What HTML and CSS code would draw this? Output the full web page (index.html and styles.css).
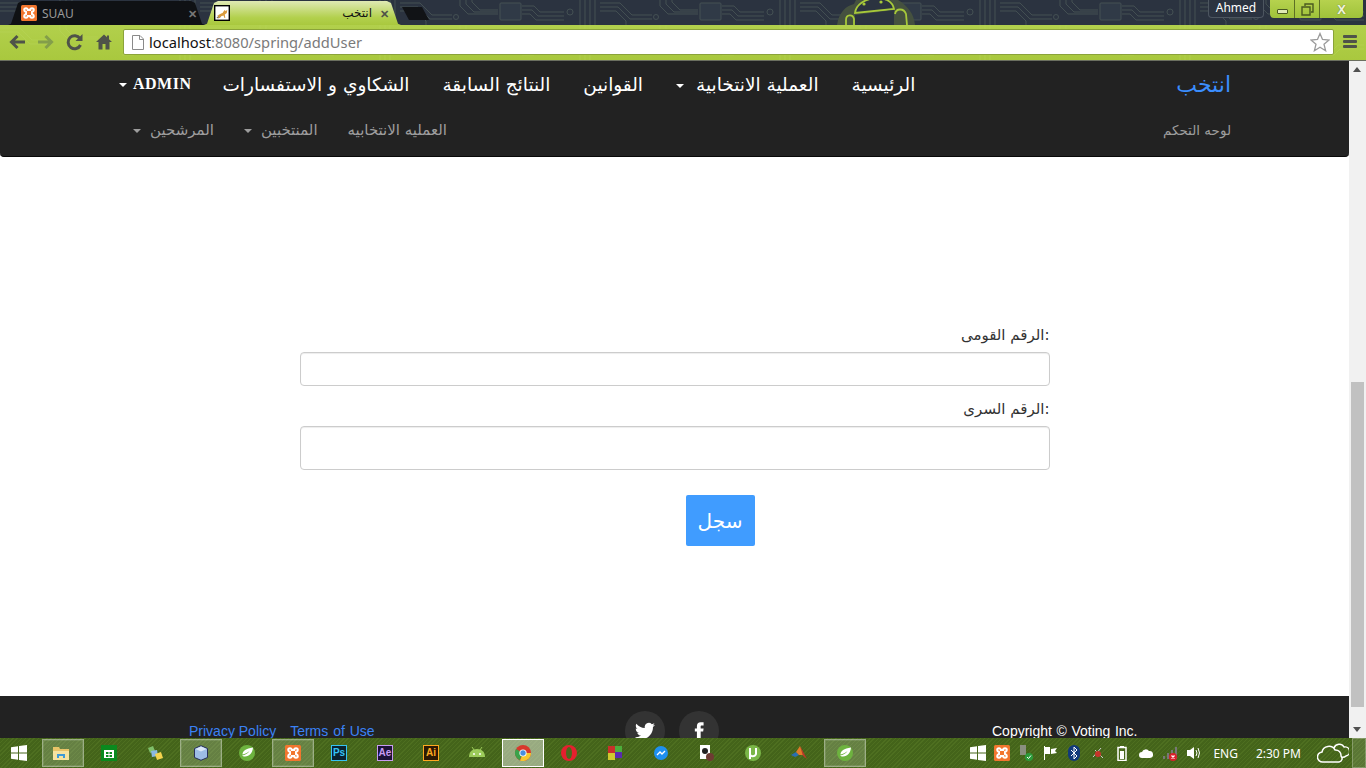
FILE: index.html
```html
<!DOCTYPE html>
<html lang="en">
<head>
    <meta charset="UTF-8">
    <meta name="viewport" content="width=device-width, initial-scale=1.0">
    <title>انتخب</title>
    <link rel="stylesheet" href="styles.css">
</head>
<body>
    <svg class="defs" width="0" height="0">
        <defs>
            <symbol id="i-win" viewBox="0 0 16 16"><path fill="#fff" d="M0 2.300 7 1.300V7.500H0zM8 1.100 16 0V7.500H8zM0 8.500H7V14.700L0 13.700zM8 8.500H16V16L8 14.900z"/></symbol>
            <symbol id="i-xampp" viewBox="0 0 16 16"><rect width="16" height="16" rx="1.500" fill="#f2762e"/><path fill="none" stroke="#fff" stroke-width="2" d="M5 3.200a1.800 1.800 0 0 0-1.800 1.800c0 1 .8 1.600 1.800 2v2c-1 .4-1.800 1-1.800 2a1.800 1.800 0 0 0 3.600 0h2.400a1.800 1.800 0 0 0 3.600 0c0-1-.8-1.600-1.800-2V7c1-.4 1.800-1 1.800-2a1.800 1.800 0 0 0-3.600 0H6.800A1.800 1.800 0 0 0 5 3.200z"/></symbol>
            <symbol id="i-spring" viewBox="0 0 16 16"><circle cx="8" cy="8" r="8" fill="#6db33f"/><path fill="#fff" d="M14 2.500c-.5 5.500-3.500 9-8 9-1.500 0-2.500-.5-3-1 3-.5 6-2 7.500-4.500-2 2-4.500 3-7 3.500C3.500 6 7 3.500 14 2.500z"/></symbol>
            <pattern id="circuit" width="200" height="25" patternUnits="userSpaceOnUse">
                <path fill="none" stroke="#434f52" d="M0 3H20L32 15H52M0 7H18L30 19H52M0 11H16L26 21V25M60 0V6L68 14H98M66 0V4L74 12H98M72 0V2L80 10H98M122 6H134L140 12H164M122 10H132L138 16H164M122 14H130L136 20H164M180 0V25M185 0V25M190 0V25M195 0V25"/>
                <rect x="100" y="3" width="21" height="17" rx="1" fill="#303a47" stroke="#434f52"/>
                <circle cx="170" cy="12" r="3" fill="none" stroke="#434f52"/>
                <circle cx="56" cy="17" r="2.500" fill="none" stroke="#434f52"/>
            </pattern>
            <pattern id="circuit-light" width="200" height="36" patternUnits="userSpaceOnUse">
                <path fill="none" stroke="#bad65c" d="M0 3H20L32 15H52M0 7H18L30 19H52M60 0V6L68 14H98M66 0V4L74 12H98M122 30H134L140 24H164M122 26H132L138 20H164M180 0V36M185 0V36M190 0V36"/>
            </pattern>
        </defs>
    </svg>

    <header class="tabstrip">
        <svg class="circuit" width="100%" height="100%"><rect width="100%" height="100%" fill="url(#circuit)"/></svg>
        <div class="tab tab-back">
            <svg class="favicon"><use href="#i-xampp"/></svg>
            <span class="tab-title">SUAU</span>
            <span class="tab-close">✕</span>
        </div>
        <div class="tab tab-active">
            <svg class="favicon" viewBox="0 0 16 16"><rect x=".7" y=".7" width="14.600" height="14.600" fill="#fff" stroke="#000" stroke-width="1.400"/><path fill="#7d7467" d="M2.500 12.500 6 10l1 2-3 1.500z"/><path fill="#d99a3d" d="M3 10.500c2-.5 3.500-2 5.500-2.500l2-3 1 1 1.800-1-.5 3-2 1.500.5 3.500H10.500l-1-2.500-3 1-1 1.500H4l1-2z"/></svg>
            <span class="tab-title tab-title-rtl" dir="rtl">انتخب</span>
            <span class="tab-close">✕</span>
        </div>
        <div class="newtab"></div>
        <svg class="android-badge" viewBox="0 0 80 25">
            <path fill="#45513f" d="M1 25C3 12 10 6 18 4L20 0H62C72 6 78 14 79 25z"/>
            <path fill="#2b3340" stroke="#a6c83a" stroke-width="1.800" d="M19 13C21-4 55-8 58 9z"/>
            <path fill="#2b3340" d="M19 15 58 10V25H19z"/>
            <path fill="none" stroke="#a6c83a" stroke-width="1.800" d="M10 25V20C10 14 17 14 18 19V25M59 14C60 8 68 8 70 14L71 25"/>
            <circle cx="28" cy="4" r="1.600" fill="#a6c83a"/>
            <circle cx="45" cy="2" r="1.600" fill="#a6c83a"/>
        </svg>
        <div class="profile">Ahmed</div>
        <div class="winbtns">
            <span class="winbtn winbtn-min"><i></i></span>
            <span class="winbtn winbtn-max"><svg width="13" height="13" viewBox="0 0 13 13"><path fill="none" stroke="#4a5a20" stroke-width="1.400" d="M4 3V1h8v8h-2M1 4h8v8H1z"/></svg></span>
            <span class="winbtn winbtn-close">X</span>
        </div>
    </header>

    <div class="toolbar">
        <svg class="circuit circuit-faint" width="100%" height="100%"><rect width="100%" height="100%" fill="url(#circuit-light)"/></svg>
        <svg class="tool" viewBox="0 0 18 18"><path fill="none" stroke="#4f5349" stroke-width="3" d="M17 9H4M9.500 3 3.500 9l6 6"/></svg>
        <svg class="tool tool-off" viewBox="0 0 18 18"><path fill="none" stroke="#7f9a4b" stroke-width="3" d="M1 9H14M8.500 3l6 6-6 6"/></svg>
        <svg class="tool" viewBox="0 0 18 18"><path fill="none" stroke="#4f5349" stroke-width="3" d="M14.500 12a6.500 6.500 0 1 1-.5-6.500"/><path fill="#4f5349" d="M16.500 1v7h-7z"/></svg>
        <svg class="tool" viewBox="0 0 18 18"><path fill="#4f5349" d="M9 1.500 1 9h2.500v7.500H7.500V11h3v5.500h4V9H17l-3-2.800V2.500h-2v1.800z"/></svg>
        <div class="omnibox">
            <svg class="pageicon" viewBox="0 0 12 15"><path fill="#fff" stroke="#8a8a8a" d="M.5.500H8L11.500 4V14.500H.5z"/><path fill="none" stroke="#8a8a8a" d="M7.500.500V4.500H11.500"/></svg>
            <span class="url"><span class="url-host">localhost</span>:8080/spring/addUser</span>
            <svg class="star" viewBox="0 0 20 20"><path fill="#fff" stroke="#9b9b9b" stroke-width="1.300" d="M10 1.500 12.500 7.500 19 8 14 12.200 15.600 18.700 10 15.200 4.400 18.700 6 12.200 1 8 7.500 7.500z"/></svg>
        </div>
        <div class="menu"><i></i><i></i><i></i></div>
    </div>

    <div class="viewport">
        <div class="page">
            <nav class="navbar">
                <div class="nav-row nav-main" dir="rtl">
                    <a class="brand">انتخب</a>
                    <ul class="nav-links">
                        <li>الرئيسية</li>
                        <li class="caret caret-wide">العملية الانتخابية</li>
                        <li>القوانين</li>
                        <li>النتائج السابقة</li>
                        <li>الشكاوي و الاستفسارات</li>
                        <li class="caret caret-latin">ADMIN</li>
                    </ul>
                </div>
                <div class="nav-row nav-sub" dir="rtl">
                    <a class="brand-sub">لوحه التحكم</a>
                    <ul class="nav-links">
                        <li>العمليه الانتخابيه</li>
                        <li class="caret">المنتخبين</li>
                        <li class="caret">المرشحين</li>
                    </ul>
                </div>
            </nav>

            <main class="content">
                <form class="login-form">
                    <label class="form-label" dir="rtl">:الرقم القومى</label>
                    <input class="form-input" type="text">
                    <label class="form-label" dir="rtl">:الرقم السرى</label>
                    <input class="form-input form-input-lg" type="password">
                    <button class="btn-submit" type="button">سجل</button>
                </form>
            </main>

            <footer class="footer">
                <div class="footer-links"><a>Privacy Policy</a><a class="terms">Terms of Use</a></div>
                <div class="footer-social">
                    <span class="social"><svg width="20" height="20" viewBox="0 0 24 24"><path fill="#fff" d="M23.953 4.570a10 10 0 0 1-2.825.775 4.958 4.958 0 0 0 2.163-2.723c-.951.555-2.005.959-3.127 1.184a4.920 4.920 0 0 0-8.384 4.482C7.690 8.095 4.067 6.130 1.640 3.162a4.822 4.822 0 0 0-.666 2.475c0 1.710.870 3.213 2.188 4.096a4.904 4.904 0 0 1-2.228-.616v.060a4.923 4.923 0 0 0 3.946 4.827 4.996 4.996 0 0 1-2.212.085 4.936 4.936 0 0 0 4.604 3.417 9.867 9.867 0 0 1-6.102 2.105c-.390 0-.779-.023-1.170-.067a13.995 13.995 0 0 0 7.557 2.209c9.053 0 13.998-7.496 13.998-13.985 0-.210 0-.420-.015-.630A9.935 9.935 0 0 0 24 4.590z"/></svg></span>
                    <span class="social"><svg width="20" height="20" viewBox="0 0 24 24"><path fill="#fff" d="M14 9V6.500c0-.8.5-1 1-1h2.500V1.500H14c-3 0-4.500 2-4.500 4.500V9H7v3.500h2.500V23H14V12.500h3l.5-3.500z"/></svg></span>
                </div>
                <div class="footer-copy">Copyright © Voting Inc.</div>
            </footer>
        </div>
        <div class="scrollbar">
            <span class="sb-arrow sb-up"></span>
            <div class="sb-track"><div class="sb-thumb"></div></div>
            <span class="sb-arrow sb-down"></span>
        </div>
    </div>

    <div class="taskbar">
        <span class="start"><svg width="16" height="16"><use href="#i-win"/></svg></span>
        <span class="task task-open task-stack">
            <svg viewBox="0 0 16 16"><path fill="#e8c468" d="M0 2h6l1 2h9v11H0z"/><path fill="#f6e3a0" d="M0 6h16v9H0z"/><path fill="#3f9ad6" d="M4 9h8v4H10v-2H6v2H4z"/></svg>
        </span>
        <span class="task">
            <svg viewBox="0 0 16 16"><rect width="16" height="16" fill="#0a8a1e"/><path fill="#fff" d="M3 5h10v8H3z"/><path fill="#0a8a1e" d="M5 7h2.500v2H5zM8.500 7H11v2H8.500zM5 10h2.500v2H5zM8.500 10H11v2H8.500z"/></svg>
        </span>
        <span class="task">
            <svg viewBox="0 0 16 16"><path fill="#7fbf6a" d="M1 3l5-2 2 5-5 2z"/><path fill="#8bb8e0" d="M4 6l6-1 1 6-6 1z"/><path fill="#f4d44d" d="M8 9l6-2 2 6-6 2z"/></svg>
        </span>
        <span class="task task-open">
            <svg viewBox="0 0 16 16"><path fill="#9dbde6" stroke="#28305a" d="M8 .7 14.500 3.500v9L8 15.300 1.500 12.500v-9z"/><path fill="#dbe8f8" d="M8 1.500 13.500 4 8 6.500 2.500 4z"/></svg>
        </span>
        <span class="task"><svg><use href="#i-spring"/></svg></span>
        <span class="task task-open"><svg><use href="#i-xampp"/></svg></span>
        <span class="task"><span class="adobe adobe-ps">Ps</span></span>
        <span class="task"><span class="adobe adobe-ae">Ae</span></span>
        <span class="task"><span class="adobe adobe-ai">Ai</span></span>
        <span class="task">
            <svg viewBox="0 0 16 16"><path fill="#9ccb5a" d="M0 12c0-5 3-8 8-8s8 3 8 8z"/><path stroke="#9ccb5a" d="M3 2l2 3M13 2l-2 3"/><circle cx="5" cy="9" r="1" fill="#fff"/><circle cx="11" cy="9" r="1" fill="#fff"/></svg>
        </span>
        <span class="task task-active">
            <svg viewBox="0 0 16 16"><circle cx="8" cy="8" r="8" fill="#d8382c"/><path fill="#f7c82f" d="M8 8 16 8A8 8 0 0 1 5 15.400z"/><path fill="#3aa24a" d="M8 8 4.500 15.200A8 8 0 0 1 1 4z"/><circle cx="8" cy="8" r="3.600" fill="#fff"/><circle cx="8" cy="8" r="2.700" fill="#4a8fe0"/></svg>
        </span>
        <span class="task">
            <svg viewBox="0 0 16 16"><circle cx="8" cy="8" r="8" fill="#e5202e"/><ellipse cx="8" cy="8" rx="3" ry="6" fill="#4a6a1e"/></svg>
        </span>
        <span class="task">
            <svg viewBox="0 0 16 16"><path fill="#c8302a" d="M1 1h7v7H1z"/><path fill="#4cae3c" d="M8 1h7v6H8z"/><path fill="#cfc92e" d="M1 8h7v7H1z"/><path fill="#5a2bb0" d="M8 7h7v6H8z"/></svg>
        </span>
        <span class="task">
            <svg viewBox="0 0 16 16"><circle cx="8" cy="8" r="7" fill="#1e90f0"/><path fill="none" stroke="#fff" stroke-width="1.300" d="M4 10l3-3 2 2 3-3"/></svg>
        </span>
        <span class="task">
            <svg viewBox="0 0 16 16"><rect x="1" width="10" height="14" fill="#fff"/><circle cx="6" cy="6" r="3" fill="#222"/><circle cx="11" cy="12" r="4" fill="#6e3b33"/></svg>
        </span>
        <span class="task">
            <svg viewBox="0 0 16 16"><circle cx="8" cy="8" r="8" fill="#7ab648"/><path fill="none" stroke="#fff" stroke-width="2" d="M5 3v6c0 3 5 3 6 0V3M5 9v5"/></svg>
        </span>
        <span class="task">
            <svg viewBox="0 0 16 16"><path fill="#2a6fb0" d="M0 10l5-3 3 3-4 2z"/><path fill="#e07a2a" d="M5 7l4-6 4 9-5 0z"/><path fill="#b8392a" d="M9 1l7 13-4-3z"/></svg>
        </span>
        <span class="task task-open"><svg><use href="#i-spring"/></svg></span>

        <div class="tray">
            <svg class="t-ico"><use href="#i-win"/></svg>
            <svg class="t-ico"><use href="#i-xampp"/></svg>
            <svg class="t-ico" viewBox="0 0 16 16"><rect x="2" width="6" height="10" fill="#8a8f7f"/><circle cx="11" cy="12" r="4" fill="#2c9a3a"/><path fill="none" stroke="#fff" d="M9 12l1.500 1.500 2.500-3"/></svg>
            <svg class="t-ico" viewBox="0 0 16 16"><path fill="#fff" d="M2 1h1v14H2zM3 2h5v7H3zM9 4l6-1-2 3 2 2-6 1z"/></svg>
            <svg class="t-ico" viewBox="0 0 16 16"><rect x="2" width="12" height="16" rx="6" fill="#123a7a"/><path fill="none" stroke="#fff" d="M5 5l6 6-3 3V2l3 3-6 6"/></svg>
            <svg class="t-ico" viewBox="0 0 16 16"><path stroke="#ccc" d="M3 12 11 3M5 5l8 8"/><circle cx="8" cy="9" r="3" fill="#c6342a"/></svg>
            <svg class="t-ico" viewBox="0 0 16 16"><path fill="none" stroke="#fff" stroke-width="1.500" d="M4 2.500h8v13H4z"/><path fill="#fff" d="M6 1h4v1H6zM6 6h4v8H6z"/></svg>
            <svg class="t-ico" viewBox="0 0 16 16"><path fill="#fff" d="M4 13a3 3 0 0 1 0-6 4 4 0 0 1 7-1 3.500 3.500 0 0 1 1 7z"/></svg>
            <svg class="t-ico" viewBox="0 0 16 16"><path fill="#777" d="M1 11h2v3H1zM5 8h2v6H5zM9 5h2v9H9zM13 2h2v12h-2z"/><circle cx="11" cy="12" r="4" fill="#d8202a"/><path stroke="#fff" stroke-width="1.300" d="M9.500 10.500l3 3M12.500 10.500l-3 3"/></svg>
            <svg class="t-ico" viewBox="0 0 16 16"><path fill="#fff" d="M1 5h3l4-3v12l-4-3H1z"/><path fill="none" stroke="#fff" d="M10 5q2 3 0 6M12 3q3 5 0 10"/></svg>
            <span class="t-lang">ENG</span>
            <span class="t-clock">2:30 PM</span>
            <svg class="t-cloud" viewBox="0 0 32 22"><path fill="none" stroke="#fff" stroke-width="1.500" d="M6 20a5 5 0 0 1-1-10 7 7 0 0 1 13-2 5.500 5.500 0 0 1 6 6 3.500 3.500 0 0 1-2 6zM17 6a5.500 5.500 0 0 1 10-1 4.500 4.500 0 0 1 2 9 5 5 0 0 1-5 1"/></svg>
            <span class="t-desktop"></span>
        </div>
    </div>
</body>
</html>
```

FILE: styles.css
```css
* {
    box-sizing: border-box;
}
html, body {
    margin: 0;
    height: 100%;
    overflow: hidden;
}
body {
    display: flex;
    flex-direction: column;
    height: 768px;
    font-family: "Liberation Sans", Arial, sans-serif;
    background: #fff;
}
.defs {
    position: absolute;
}

/* browser frame */
.tabstrip {
    position: relative;
    display: flex;
    align-items: flex-start;
    height: 25px;
    flex: none;
    background: #2b3340;
    overflow: hidden;
}
.circuit {
    position: absolute;
    inset: 0;
}
.circuit-faint {
    opacity: .45;
}
.tab {
    position: relative;
    display: flex;
    align-items: center;
    width: 197px;
    height: 24px;
    margin-top: 1px;
    font-family: "Noto Sans", sans-serif;
    font-size: 12px;
    clip-path: polygon(0 100%, 3px 95%, 10px 8%, 14px 0, calc(100% - 14px) 0, calc(100% - 10px) 8%, calc(100% - 3px) 95%, 100% 100%);
}
.tab-back {
    margin-left: 8px;
    padding: 0 6px 0 13px;
    background: #0f1114;
    color: #9a9a9a;
}
.tab-active {
    margin-left: -1px;
    padding: 0 10px 0 10px;
    background: linear-gradient(#dfe9b4, #b2d04c 70%, #a9c83e);
    color: #111;
}
.favicon {
    width: 16px;
    height: 16px;
    flex: none;
}
.tab-title {
    flex: 1;
    margin-left: 5px;
}
.tab-title-rtl {
    margin-right: 5px;
    font-family: "DejaVu Sans", sans-serif;
    text-align: right;
}
.tab-close {
    flex: none;
    width: 14px;
    font-size: 11px;
    font-weight: 700;
    text-align: center;
    color: #777;
}
.tab-active .tab-close {
    color: #4f5349;
}
.newtab {
    position: relative;
    width: 27px;
    height: 13px;
    margin: 7px 0 0 1px;
    background: #111316;
    clip-path: polygon(0 0, 20px 0, 100% 100%, 7px 100%);
}
.android-badge {
    position: relative;
    width: 80px;
    height: 25px;
    margin-left: 407px;
}
.profile {
    position: relative;
    width: 56px;
    height: 18px;
    margin-left: 292px;
    border: 1px solid #4d5660;
    border-top: 0;
    border-radius: 0 0 4px 4px;
    background: #2b3340;
    color: #fff;
    font-family: "Noto Sans", sans-serif;
    font-size: 12px;
    line-height: 16px;
    text-align: center;
}
.winbtns {
    position: relative;
    display: flex;
    height: 18px;
    margin-left: 6px;
    border-radius: 0 0 4px 4px;
    overflow: hidden;
    background: linear-gradient(#b6d24e, #9fc23a);
}
.winbtn {
    display: flex;
    align-items: center;
    justify-content: center;
    width: 25px;
    border-right: 1px solid #5d6f25;
}
.winbtn-close {
    width: 43px;
    border-right: 0;
    color: #eef3d8;
    font-family: "Noto Sans", sans-serif;
    font-size: 13px;
    font-weight: 700;
    text-shadow: 0 0 1px #4a5a20;
}
.winbtn-min i {
    display: block;
    width: 11px;
    height: 5px;
    margin-top: 4px;
    border: 1px solid #4a5a20;
    background: #dfe9b4;
    border-radius: 1px;
}
.toolbar {
    position: relative;
    display: flex;
    align-items: center;
    flex: none;
    height: 36px;
    padding: 0 0 2px 8px;
    background: linear-gradient(#b2d04c, #a9c83e);
    border-bottom: 1px solid #6b6f60;
}
.tool {
    position: relative;
    width: 18px;
    height: 18px;
    flex: none;
    margin-right: 11px;
}
.tool-off {
    opacity: .9;
}
.omnibox {
    position: relative;
    display: flex;
    align-items: center;
    flex: 1;
    height: 26px;
    margin-left: -1px;
    margin-top: 1px;
    padding: 0 3px 0 8px;
    background: #fff;
    border: 1px solid #8ba33a;
    border-radius: 2px;
}
.pageicon {
    width: 12px;
    height: 15px;
    flex: none;
}
.url {
    flex: 1;
    margin-left: 5px;
    font-family: "Noto Sans", sans-serif;
    font-size: 14.7px;
    color: #7a7a7a;
}
.url-host {
    color: #111;
}
.star {
    width: 20px;
    height: 20px;
    flex: none;
}
.menu {
    position: relative;
    display: flex;
    flex-direction: column;
    gap: 2px;
    width: 32px;
    padding: 0 9px;
}
.menu i {
    display: block;
    height: 3px;
    background: #4f5349;
    border-radius: 1px;
}

/* page */
.viewport {
    display: flex;
    flex: 1;
    min-height: 0;
}
.page {
    flex: 1;
    min-width: 0;
    overflow: hidden;
    background: #fff;
}
.navbar {
    height: 96px;
    background: #222;
    border-bottom: 1px solid #080808;
    border-radius: 0 0 4px 4px;
}
.nav-row {
    display: flex;
    align-items: center;
    padding-right: 118px;
    font-family: "DejaVu Sans", sans-serif;
}
.nav-main {
    height: 49px;
    padding-bottom: 3px;
}
.nav-sub {
    height: 46px;
    padding-bottom: 6px;
}
.nav-links {
    display: flex;
    align-items: center;
    margin: 0;
    padding: 0;
    list-style: none;
}
.nav-main .nav-links {
    gap: 33px;
    margin-right: 261px;
    color: #fff;
    font-size: 18.5px;
}
.nav-sub .nav-links {
    gap: 30px;
    margin-right: 716px;
    color: #9d9d9d;
    font-size: 15px;
}
.brand {
    color: #3b8eff;
    font-size: 22px;
}
.brand-sub {
    color: #9d9d9d;
    font-size: 13.5px;
}
.caret::after {
    content: "";
    display: inline-block;
    margin-right: 6px;
    vertical-align: middle;
    border-top: 4px solid currentColor;
    border-left: 4px solid transparent;
    border-right: 4px solid transparent;
}
.nav-sub .caret::after {
    margin-right: 9px;
}
.caret-wide::after {
    margin-right: 12px;
}
.caret-latin {
    margin-right: -2px;
    font-family: "Liberation Serif", serif;
    font-size: 16px;
    font-weight: 700;
    letter-spacing: .5px;
}
.content {
    height: 539px;
    padding-top: 171px;
}
.login-form {
    display: flex;
    flex-direction: column;
    width: 750px;
    margin: 0 auto;
}
.form-label {
    height: 18px;
    margin-bottom: 6px;
    font-family: "DejaVu Sans", sans-serif;
    font-size: 15px;
    line-height: 14px;
    color: #333;
    text-align: right;
}
.form-input {
    height: 34px;
    margin-bottom: 16px;
    border: 1px solid #ccc;
    border-radius: 4px;
    box-shadow: inset 0 1px 1px rgba(0, 0, 0, .075);
}
.form-input-lg {
    height: 44px;
    margin-bottom: 25px;
}
.btn-submit {
    align-self: center;
    width: 69px;
    height: 51px;
    margin-left: 91px;
    border: 0;
    border-radius: 2px;
    background: #409cff;
    color: #fff;
    font-family: "DejaVu Sans", sans-serif;
    font-size: 20px;
}
.footer {
    display: flex;
    height: 60px;
    background: #222;
    padding-left: 189px;
}
.footer-links {
    display: flex;
    gap: 14px;
    width: 436px;
    padding-top: 27px;
    color: #3b82f6;
    font-size: 14px;
}
.terms {
    word-spacing: 1px;
}
.footer-social {
    display: flex;
    gap: 14px;
    width: 367px;
    padding-top: 15px;
}
.social {
    display: flex;
    align-items: center;
    justify-content: center;
    width: 40px;
    height: 40px;
    border-radius: 50%;
    background: #333;
}
.footer-copy {
    padding-top: 27px;
    color: #fff;
    font-size: 14px;
    word-spacing: .7px;
}
.scrollbar {
    display: flex;
    flex-direction: column;
    flex: none;
    width: 17px;
    background: #f1f1f1;
}
.sb-arrow {
    display: block;
    flex: none;
    height: 17px;
    position: relative;
}
.sb-arrow::after {
    content: "";
    position: absolute;
    left: 4px;
    top: 6px;
    border-left: 4px solid transparent;
    border-right: 4px solid transparent;
}
.sb-up::after {
    border-bottom: 5px solid #505050;
}
.sb-down::after {
    border-top: 5px solid #505050;
}
.sb-track {
    flex: 1;
    padding: 304px 2px 0;
}
.sb-thumb {
    height: 325px;
    background: #c1c1c1;
}

/* windows taskbar */
.taskbar {
    display: flex;
    align-items: center;
    flex: none;
    height: 30px;
    color: #fff;
    background: repeating-linear-gradient(135deg, #4e6f20 0 1px, #44641a 1px 3px);
}
.start {
    display: flex;
    justify-content: center;
    width: 38px;
    flex: none;
    margin-right: 4px;
}
.task {
    display: flex;
    align-items: center;
    justify-content: center;
    flex: none;
    width: 42px;
    height: 28px;
    margin-right: 4px;
}
.task svg {
    width: 16px;
    height: 16px;
}
.task-open {
    background: rgba(255, 255, 255, .18);
    border: 1px solid rgba(255, 255, 255, .35);
    box-shadow: inset 0 0 0 1px rgba(255, 255, 255, .1);
}
.task-stack {
    padding-right: 5px;
}
.task-active {
    background: rgba(255, 255, 255, .45);
    border: 1px solid #fff;
}
.adobe {
    display: block;
    width: 16px;
    height: 16px;
    border: 1px solid;
    font-size: 10px;
    font-weight: 700;
    line-height: 14px;
    text-align: center;
}
.adobe-ps {
    background: #0b2230;
    color: #35c3f3;
}
.adobe-ae {
    background: #1d1238;
    color: #c79bf2;
}
.adobe-ai {
    background: #2e1a04;
    color: #ffa91f;
}
.tray {
    display: flex;
    align-items: center;
    flex: 1;
    justify-content: flex-end;
    height: 100%;
}
.t-ico {
    flex: none;
    width: 16px;
    height: 16px;
    margin-right: 8px;
}
.t-lang {
    margin: 0 18px 0 3px;
    font-family: "Noto Sans", sans-serif;
    font-size: 12px;
}
.t-clock {
    margin-right: 16px;
    font-family: "Noto Sans", sans-serif;
    font-size: 12px;
}
.t-cloud {
    flex: none;
    width: 32px;
    height: 22px;
    margin-right: 3px;
}
.t-desktop {
    flex: none;
    width: 14px;
    height: 100%;
    background: rgba(255, 255, 255, .12);
    border: 1px solid rgba(255, 255, 255, .25);
}
```
